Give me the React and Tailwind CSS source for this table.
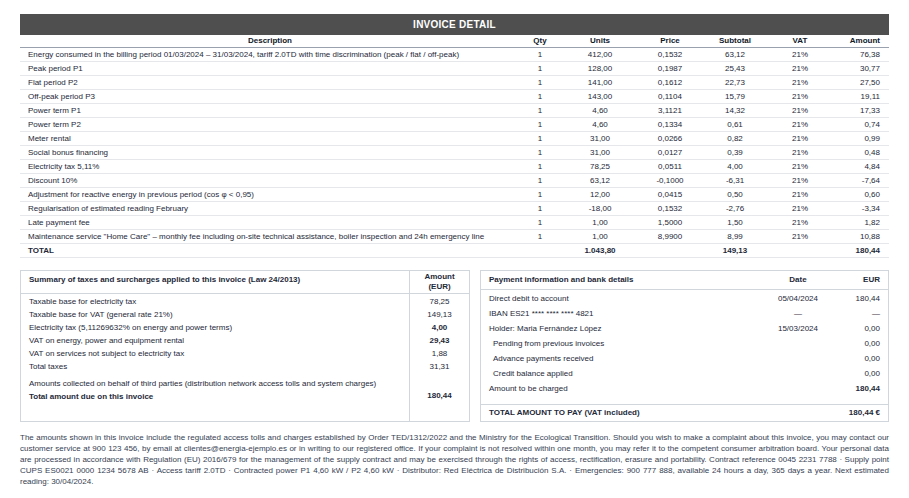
import React from 'react';

const rows = [
  { d: 'Energy consumed in the billing period 01/03/2024 – 31/03/2024, tariff 2.0TD with time discrimination (peak / flat / off-peak)', q: '1', u: '412,00', p: '0,1532', s: '63,12', t: '21%', a: '76,38' },
  { d: 'Peak period P1', q: '1', u: '128,00', p: '0,1987', s: '25,43', t: '21%', a: '30,77' },
  { d: 'Flat period P2', q: '1', u: '141,00', p: '0,1612', s: '22,73', t: '21%', a: '27,50' },
  { d: 'Off-peak period P3', q: '1', u: '143,00', p: '0,1104', s: '15,79', t: '21%', a: '19,11' },
  { d: 'Power term P1', q: '1', u: '4,60', p: '3,1121', s: '14,32', t: '21%', a: '17,33' },
  { d: 'Power term P2', q: '1', u: '4,60', p: '0,1334', s: '0,61', t: '21%', a: '0,74' },
  { d: 'Meter rental', q: '1', u: '31,00', p: '0,0266', s: '0,82', t: '21%', a: '0,99' },
  { d: 'Social bonus financing', q: '1', u: '31,00', p: '0,0127', s: '0,39', t: '21%', a: '0,48' },
  { d: 'Electricity tax 5,11%', q: '1', u: '78,25', p: '0,0511', s: '4,00', t: '21%', a: '4,84' },
  { d: 'Discount 10%', q: '1', u: '63,12', p: '-0,1000', s: '-6,31', t: '21%', a: '-7,64' },
  { d: 'Adjustment for reactive energy in previous period (cos φ < 0,95)', q: '1', u: '12,00', p: '0,0415', s: '0,50', t: '21%', a: '0,60' },
  { d: 'Regularisation of estimated reading February', q: '1', u: '-18,00', p: '0,1532', s: '-2,76', t: '21%', a: '-3,34' },
  { d: 'Late payment fee', q: '1', u: '1,00', p: '1,5000', s: '1,50', t: '21%', a: '1,82' },
  { d: 'Maintenance service "Home Care" – monthly fee including on-site technical assistance, boiler inspection and 24h emergency line', q: '1', u: '1,00', p: '8,9900', s: '8,99', t: '21%', a: '10,88' },
];

const cols = 'grid grid-cols-[500px_40px_80px_60px_70px_60px_58px]';

function Row({ r, bold }) {
  return (
    <div className={`${cols} h-[14px] items-center border-b border-gray-200 ${bold ? 'font-bold' : ''}`}>
      <div className="px-2 truncate">{r.d}</div>
      <div className="text-center">{r.q}</div>
      <div className="text-center">{r.u}</div>
      <div className="text-center">{r.p}</div>
      <div className="text-center">{r.s}</div>
      <div className="text-center">{r.t}</div>
      <div className="text-right pr-2">{r.a}</div>
    </div>
  );
}

export default function App() {
  return (
    <div
      className="w-[909px] h-[498px] bg-white px-5 pt-[14px] text-[8px] leading-[10px] text-gray-800"
      style={{ fontFamily: '"Liberation Sans", Arial, sans-serif' }}
    >
      <div className="h-[21px] bg-[#4f4f4f] text-white font-bold text-[10px] flex items-center justify-center tracking-wide">
        INVOICE DETAIL
      </div>

      <div className={`${cols} h-[13px] items-center font-bold text-gray-900 border-b border-gray-400`}>
        <div className="text-center">Description</div>
        <div className="text-center">Qty</div>
        <div className="text-center">Units</div>
        <div className="text-center">Price</div>
        <div className="text-center">Subtotal</div>
        <div className="text-center">VAT</div>
        <div className="text-right pr-2">Amount</div>
      </div>

      {rows.map((r, i) => (
        <Row key={i} r={r} />
      ))}
      <Row r={{ d: 'TOTAL', q: '', u: '1.043,80', p: '', s: '149,13', t: '', a: '180,44' }} bold />

      <div className="flex gap-[10px] mt-[12px] h-[152px]">
        <div className="w-[450px] border border-gray-300 flex flex-col">
          <div className="flex border-b border-gray-300">
            <div className="flex-1 px-2 py-[4px] font-bold">
              Summary of taxes and surcharges applied to this invoice (Law 24/2013)
            </div>
            <div className="w-[60px] text-center font-bold py-[1px] border-l border-gray-300">
              Amount<br />(EUR)
            </div>
          </div>
          <div className="flex flex-1">
            <div className="flex-1 px-2 py-[3px] flex flex-col gap-[3px]">
              <div>Taxable base for electricity tax</div>
              <div>Taxable base for VAT (general rate 21%)</div>
              <div>Electricity tax (5,11269632% on energy and power terms)</div>
              <div>VAT on energy, power and equipment rental</div>
              <div>VAT on services not subject to electricity tax</div>
              <div>Total taxes</div>
              <div className="mt-[4px]">Amounts collected on behalf of third parties (distribution network access tolls and system charges)</div>
              <div className="font-bold">Total amount due on this invoice</div>
            </div>
            <div className="w-[60px] border-l border-gray-300 flex flex-col items-center py-[3px] gap-[3px]">
              <div>78,25</div>
              <div>149,13</div>
              <div className="font-bold">4,00</div>
              <div className="font-bold">29,43</div>
              <div>1,88</div>
              <div>31,31</div>
              <div className="mt-[16px] font-bold">180,44</div>
            </div>
          </div>
        </div>

        <div className="flex-1 border border-gray-300 flex flex-col">
          <div className="grid grid-cols-[1fr_60px_60px] border-b border-gray-300 items-center">
            <div className="px-2 py-[4px] font-bold">Payment information and bank details</div>
            <div className="text-center font-bold">Date</div>
            <div className="text-right pr-2 font-bold">EUR</div>
          </div>
          <div className="grid grid-cols-[1fr_60px_60px] gap-y-[5px] py-[4px]">
            <div className="px-2">Direct debit to account</div>
            <div className="text-center">05/04/2024</div>
            <div className="text-right pr-2">180,44</div>
            <div className="px-2">IBAN ES21 **** **** **** 4821</div>
            <div className="text-center">—</div>
            <div className="text-right pr-2">—</div>
            <div className="px-2">Holder: Maria Fernández López</div>
            <div className="text-center">15/03/2024</div>
            <div className="text-right pr-2">0,00</div>
            <div className="px-3">Pending from previous invoices</div>
            <div></div>
            <div className="text-right pr-2">0,00</div>
            <div className="px-3">Advance payments received</div>
            <div></div>
            <div className="text-right pr-2">0,00</div>
            <div className="px-3">Credit balance applied</div>
            <div></div>
            <div className="text-right pr-2">0,00</div>
            <div className="px-2">Amount to be charged</div>
            <div></div>
            <div className="text-right pr-2 font-bold">180,44</div>
          </div>
          <div className="mt-auto border-t border-gray-300 grid grid-cols-[1fr_60px] py-[3px]">
            <div className="px-2 font-bold">TOTAL AMOUNT TO PAY (VAT included)</div>
            <div className="text-right pr-2 font-bold">180,44 €</div>
          </div>
        </div>
      </div>

      <p className="mt-[10px] text-[8px] leading-[11px] text-gray-700 text-justify">
        The amounts shown in this invoice include the regulated access tolls and charges established by Order TED/1312/2022 and the Ministry for the Ecological Transition. Should you wish to make a complaint about this invoice, you may contact our customer service at 900 123 456, by email at clientes@energia-ejemplo.es or in writing to our registered office. If your complaint is not resolved within one month, you may refer it to the competent consumer arbitration board. Your personal data are processed in accordance with Regulation (EU) 2016/679 for the management of the supply contract and may be exercised through the rights of access, rectification, erasure and portability. Contract reference 0045 2231 7788 · Supply point CUPS ES0021 0000 1234 5678 AB · Access tariff 2.0TD · Contracted power P1 4,60 kW / P2 4,60 kW · Distributor: Red Eléctrica de Distribución S.A. · Emergencies: 900 777 888, available 24 hours a day, 365 days a year. Next estimated reading: 30/04/2024.
      </p>
    </div>
  );
}
